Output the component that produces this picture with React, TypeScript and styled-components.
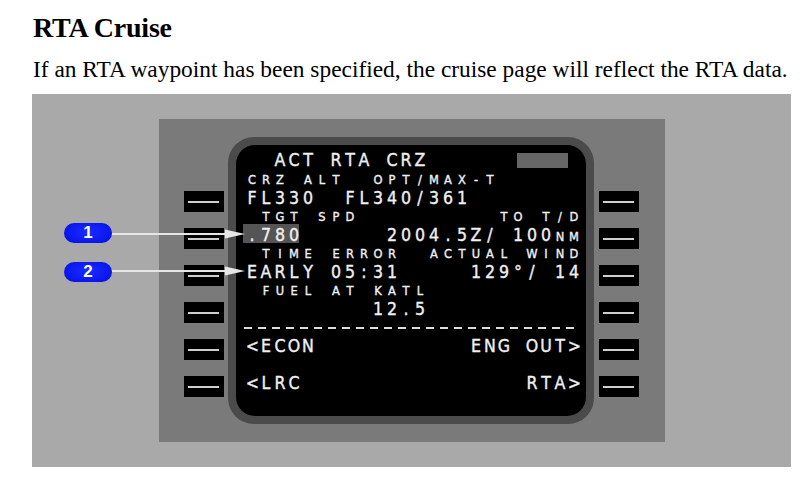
import React from "react";
import styled, { createGlobalStyle, css } from "styled-components";

const GlobalStyle = createGlobalStyle`
  html, body { margin: 0; padding: 0; background: #fff; }
`;

const Page = styled.div`
  position: relative;
  width: 800px;
  height: 482px;
  overflow: hidden;
  box-sizing: border-box;
  padding-left: 32px;
  font-family: "Liberation Serif", "Times New Roman", serif;
  color: #000;
`;

const Heading = styled.h2`
  margin: 12px 0 0 1px;
  font-size: 28px;
  font-weight: bold;
  line-height: 32px;
  letter-spacing: -0.2px;
`;

const Lead = styled.p`
  margin: 12px 0 0 1px;
  font-size: 23.4px;
  line-height: 26px;
  white-space: nowrap;
`;

const Figure = styled.div`
  margin-top: 12px;
  width: 759px;
  height: 373px;
  background: #a9a9a9;
  display: flex;
  align-items: center;
  justify-content: center;
`;

const Console = styled.div`
  width: 506px;
  height: 323px;
  box-sizing: border-box;
  background: #7a7a7a;
  display: flex;
  align-items: flex-start;
  padding: 18px 26px 0 25px;
`;

const KeyColumn = styled.div`
  display: flex;
  flex-direction: column;
  gap: 16px;
  margin-top: 54px;
`;

const Key = styled.div`
  width: 40px;
  height: 21px;
  background: #000;
  display: flex;
  align-items: center;
  justify-content: center;
  &::after {
    content: "";
    width: 31px;
    height: 2px;
    background: #cfcfcf;
  }
`;

const Bezel = styled.div`
  width: 366px;
  height: 287px;
  box-sizing: border-box;
  padding: 8px;
  margin: 0 5px 0 4px;
  background: #4b4b4b;
  border-radius: 26px;
`;

const Screen = styled.div`
  height: 100%;
  box-sizing: border-box;
  padding: 3px 5px 0 9px;
  background: #000;
  border-radius: 19px;
  color: #f0f0f0;
  font-family: "DejaVu Sans", "Liberation Sans", sans-serif;
  -webkit-text-stroke: 0.4px #f0f0f0;
`;

const Row = styled.div<{ $h: number }>`
  display: flex;
  align-items: baseline;
  height: ${(p) => p.$h}px;
  line-height: ${(p) => p.$h}px;
`;

const Seg = styled.span<{ $small?: boolean; $push?: boolean; $mark?: boolean }>`
  display: flex;
  align-items: baseline;
  font-size: ${(p) => (p.$small ? "13px" : "18px")};
  margin-left: ${(p) => (p.$push ? "auto" : "0")};
  ${(p) =>
    p.$mark &&
    css`
      margin-left: -2px;
      padding-left: 2px;
      width: 54px;
      background: linear-gradient(#555 0 19px, transparent 19px);
    `}
`;

const Cell = styled.span`
  flex: none;
  display: inline-block;
  width: 14px;
  text-align: center;
  transform: scaleX(0.88);
`;

const StatusBox = styled.div`
  align-self: flex-start;
  margin: 5px 13px 0 auto;
  width: 51px;
  height: 15px;
  background: #666;
`;

const DashRow = styled.div`
  height: 15px;
  display: flex;
  align-items: center;
`;

const Dashes = styled.div`
  margin-left: -1px;
  width: 336px;
  height: 2px;
  background: repeating-linear-gradient(90deg, #dcdcdc 0 8px, transparent 8px 14px);
`;

const Callout = styled.div<{ $top: number }>`
  position: absolute;
  left: 64px;
  top: ${(p) => p.$top}px;
  width: 48px;
  height: 20px;
  border-radius: 10px;
  background: radial-gradient(ellipse at 50% 45%, #1a2cff 0%, #0a16ee 70%, #0710c8 100%);
  color: #fff;
  font: bold 17px/20px "Liberation Sans", Arial, sans-serif;
  text-align: center;
`;

const Leaders = styled.svg`
  position: absolute;
  left: 0;
  top: 0;
  pointer-events: none;
`;

const Txt = ({ s }: { s: string }) => (
  <>
    {[...s].map((c, i) => (
      <Cell key={i}>{c === " " ? "\u00a0" : c}</Cell>
    ))}
  </>
);

const keys = [0, 1, 2, 3, 4, 5];

export default function App() {
  return (
    <Page>
      <GlobalStyle />
      <Heading>RTA Cruise</Heading>
      <Lead>If an RTA waypoint has been specified, the cruise page will reflect the RTA data.</Lead>
      <Figure>
        <Console>
          <KeyColumn>
            {keys.map((k) => (
              <Key key={k} />
            ))}
          </KeyColumn>
          <Bezel>
            <Screen>
              <Row $h={24}>
                <Seg>
                  <Txt s="  ACT RTA CRZ" />
                </Seg>
                <StatusBox />
              </Row>
              <Row $h={15}>
                <Seg $small>
                  <Txt s="CRZ ALT  OPT/MAX-T" />
                </Seg>
              </Row>
              <Row $h={22}>
                <Seg>
                  <Txt s="FL330  FL340/361" />
                </Seg>
              </Row>
              <Row $h={15}>
                <Seg $small>
                  <Txt s=" TGT SPD" />
                </Seg>
                <Seg $small $push>
                  <Txt s="TO T/D" />
                </Seg>
              </Row>
              <Row $h={22}>
                <Seg $mark>
                  <Txt s=".780" />
                </Seg>
                <Seg $push>
                  <Txt s="2004.5Z/ 100" />
                  <Seg $small>
                    <Txt s="NM" />
                  </Seg>
                </Seg>
              </Row>
              <Row $h={15}>
                <Seg $small>
                  <Txt s=" TIME ERROR" />
                </Seg>
                <Seg $small $push>
                  <Txt s="ACTUAL WIND" />
                </Seg>
              </Row>
              <Row $h={22}>
                <Seg>
                  <Txt s="EARLY 05:31" />
                </Seg>
                <Seg $push>
                  <Txt s="129°/ 14" />
                </Seg>
              </Row>
              <Row $h={15}>
                <Seg $small>
                  <Txt s=" FUEL AT KATL" />
                </Seg>
              </Row>
              <Row $h={22}>
                <Seg>
                  <Txt s="         12.5" />
                </Seg>
              </Row>
              <DashRow>
                <Dashes />
              </DashRow>
              <Row $h={22}>
                <Seg>
                  <Txt s="<ECON" />
                </Seg>
                <Seg $push>
                  <Txt s="ENG OUT>" />
                </Seg>
              </Row>
              <Row $h={15} />
              <Row $h={22}>
                <Seg>
                  <Txt s="<LRC" />
                </Seg>
                <Seg $push>
                  <Txt s="RTA>" />
                </Seg>
              </Row>
            </Screen>
          </Bezel>
          <KeyColumn>
            {keys.map((k) => (
              <Key key={k} />
            ))}
          </KeyColumn>
        </Console>
      </Figure>
      <Leaders width="800" height="482" viewBox="0 0 800 482">
        <g fill="#e6e6e6" stroke="#e6e6e6">
          <line x1="112" y1="234" x2="230" y2="234" strokeWidth="2" />
          <polygon points="225,229.5 245,234 225,238.5" stroke="none" />
          <line x1="112" y1="271" x2="230" y2="271" strokeWidth="2" />
          <polygon points="225,266.5 245,271 225,275.5" stroke="none" />
        </g>
      </Leaders>
      <Callout $top={223}>1</Callout>
      <Callout $top={262}>2</Callout>
    </Page>
  );
}
